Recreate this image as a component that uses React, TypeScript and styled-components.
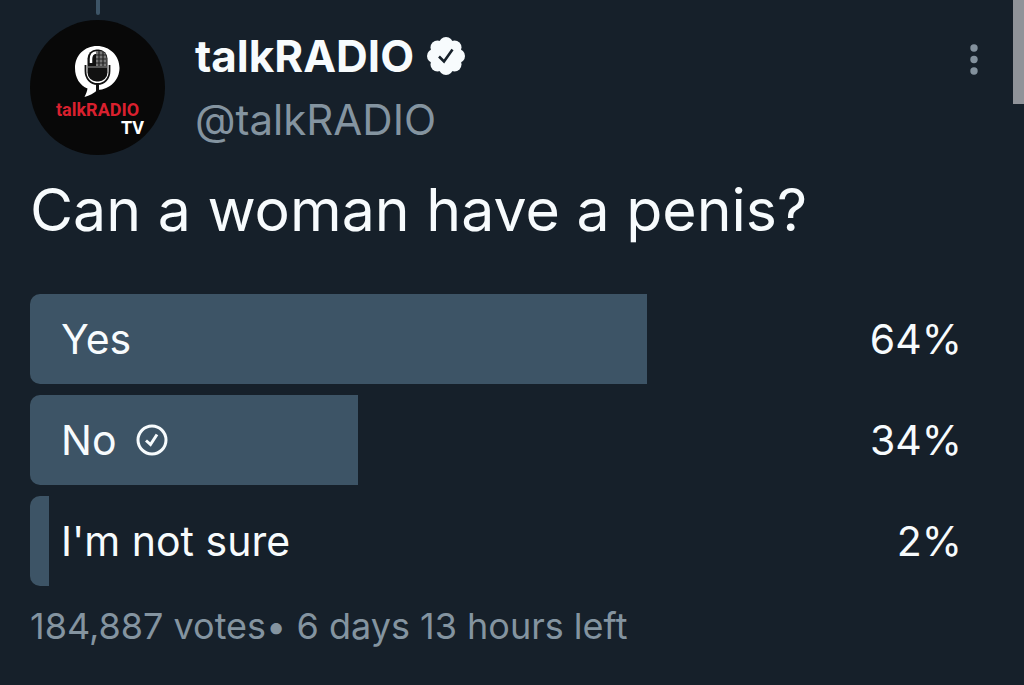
import React from "react";
import styled, { createGlobalStyle } from "styled-components";

const GlobalStyle = createGlobalStyle`
  * { box-sizing: border-box; }
  body {
    margin: 0;
    background: #16202a;
    color: #f7fbfd;
    font-family: Inter, "Liberation Sans", sans-serif;
  }
`;

const Page = styled.div`
  display: flex;
  align-items: flex-start;
  min-height: 100vh;
`;

const Tweet = styled.article`
  flex: 1;
  min-width: 0;
  padding: 0 19px 32px 30px;
`;

const ScrollThumb = styled.div`
  width: 11px;
  height: 104px;
  background: #909399;
`;

const Header = styled.header`
  display: flex;
  gap: 30px;
`;

const AvatarColumn = styled.div`
  display: flex;
  flex-direction: column;
  align-items: center;
`;

const ThreadLine = styled.div`
  width: 4px;
  height: 15px;
  margin-bottom: 5px;
  border-radius: 0 0 2px 2px;
  background: #3d5466;
`;

const AvatarArt = styled.svg`
  display: block;
  width: 135px;
  height: 135px;
`;

const Author = styled.div`
  flex: 1;
  display: flex;
  flex-direction: column;
  gap: 16px;
  padding-top: 32px;
`;

const NameRow = styled.div`
  display: flex;
  align-items: center;
  gap: 12px;
`;

const Name = styled.span`
  font-size: 44px;
  line-height: 48px;
  font-weight: 700;
`;

const Handle = styled.a`
  align-self: flex-start;
  color: #8494a0;
  font-size: 42px;
  line-height: 48px;
  text-decoration: none;
`;

const MenuButton = styled.button`
  align-self: flex-start;
  margin-top: 40px;
  padding: 0 12px;
  border: 0;
  background: none;
  color: #83919d;
  cursor: pointer;

  svg { display: block; }
`;

const Question = styled.h1`
  margin: 19px 0 0;
  font-size: 59px;
  line-height: 72px;
  font-weight: 400;
`;

const Poll = styled.ul`
  display: flex;
  flex-direction: column;
  gap: 11px;
  margin: 48px 0 0;
  padding: 0;
  list-style: none;
`;

const Option = styled.li`
  display: grid;
  height: 90px;
`;

const Fill = styled.div`
  grid-area: 1 / 1;
  border-radius: 10px 0 0 10px;
  background: #3d5466;
`;

const OptionContent = styled.div`
  grid-area: 1 / 1;
  display: flex;
  align-items: center;
  justify-content: space-between;
  padding: 0 32px 0 31px;
  font-size: 41px;
  line-height: 48px;
`;

const OptionLabel = styled.span`
  display: flex;
  align-items: center;
  gap: 20px;
`;

const Footer = styled.p`
  margin: 17px 0 0;
  color: #8494a0;
  font-size: 36px;
  line-height: 46px;
`;

const Avatar = () => (
  <AvatarArt viewBox="0 0 135 135" role="img" aria-label="talkRADIO TV">
    <circle cx="67.500" cy="67.500" r="67.500" fill="#080808" />
    <path
      d="M67 26c-12.500 0-22 9.500-22 22 0 10 5 17.500 12.500 20.500-.5 3-1.500 5.500-3 8.500 5-1.500 9.500-3.500 13-7C80 69.500 89.500 60 89.500 48 89.500 35.500 79.500 26 67 26z"
      fill="#fff"
    />
    <rect x="57.500" y="29.500" width="20" height="32" rx="9" fill="#111" />
    <path d="M66 31h3c5 0 7.500 3 7.500 7.500V46H66z" fill="#777" />
    <path d="M66 35h10M66 39h10M66 43h10M69 31v15M73 32v14" stroke="#222" strokeWidth="1.200" />
    <path d="M61 43v-4c0-4 1.500-6 5-6.500" fill="none" stroke="#fff" strokeWidth="2.500" />
    <path d="M58 47h19" stroke="#999" strokeWidth="1" />
    <path
      d="M55.500 45v6c0 7.500 5 13 12 13s12-5.500 12-13v-6"
      fill="none"
      stroke="#111"
      strokeWidth="1.800"
    />
    <path d="M67.500 63v8" stroke="#111" strokeWidth="3" />
    <g fontFamily='Roboto, "Liberation Sans", sans-serif' fontWeight="700">
      <text x="26" y="96" fontSize="18" fill="#d9202e">
        talkRADIO
      </text>
      <text x="91" y="114" fontSize="18" fill="#fff">
        TV
      </text>
    </g>
  </AvatarArt>
);

const VerifiedBadge = () => (
  <svg width="40" height="40" viewBox="0 0 40 40" role="img" aria-label="Verified account">
    <g fill="#f7fbfd">
      <circle cx="20" cy="20" r="14" />
      <circle cx="20" cy="8" r="7" />
      <circle cx="28.500" cy="11.500" r="7" />
      <circle cx="32" cy="20" r="7" />
      <circle cx="28.500" cy="28.500" r="7" />
      <circle cx="20" cy="32" r="7" />
      <circle cx="11.500" cy="28.500" r="7" />
      <circle cx="8" cy="20" r="7" />
      <circle cx="11.500" cy="11.500" r="7" />
    </g>
    <path d="M13 20.500l5 5 8.500-12" fill="none" stroke="#16202a" strokeWidth="2.600" />
  </svg>
);

const VotedIcon = () => (
  <svg width="32" height="32" viewBox="0 0 32 32" role="img" aria-label="Your vote">
    <circle cx="16" cy="16" r="14" fill="none" stroke="#f7fbfd" strokeWidth="3" />
    <path d="M10 16.500l4.500 4 6.500-10" fill="none" stroke="#f7fbfd" strokeWidth="3" />
  </svg>
);

const options = [
  { label: "Yes", percent: 64, voted: false },
  { label: "No", percent: 34, voted: true },
  { label: "I'm not sure", percent: 2, voted: false },
];

export default function App() {
  return (
    <Page>
      <GlobalStyle />
      <Tweet>
        <Header>
          <AvatarColumn>
            <ThreadLine />
            <Avatar />
          </AvatarColumn>
          <Author>
            <NameRow>
              <Name>talkRADIO</Name>
              <VerifiedBadge />
            </NameRow>
            <Handle href="#talkRADIO">@talkRADIO</Handle>
          </Author>
          <MenuButton type="button" aria-label="More options">
            <svg width="16" height="40" viewBox="0 0 16 40" fill="currentColor">
              <circle cx="8" cy="8" r="3.700" />
              <circle cx="8" cy="19.500" r="3.700" />
              <circle cx="8" cy="31" r="3.700" />
            </svg>
          </MenuButton>
        </Header>
        <Question>Can a woman have a penis?</Question>
        <Poll>
          {options.map((option) => (
            <Option key={option.label}>
              <Fill style={{ width: `${option.percent}%` }} />
              <OptionContent>
                <OptionLabel>
                  {option.label}
                  {option.voted && <VotedIcon />}
                </OptionLabel>
                <span>{option.percent}%</span>
              </OptionContent>
            </Option>
          ))}
        </Poll>
        <Footer>184,887 votes• 6 days 13 hours left</Footer>
      </Tweet>
      <ScrollThumb />
    </Page>
  );
}
